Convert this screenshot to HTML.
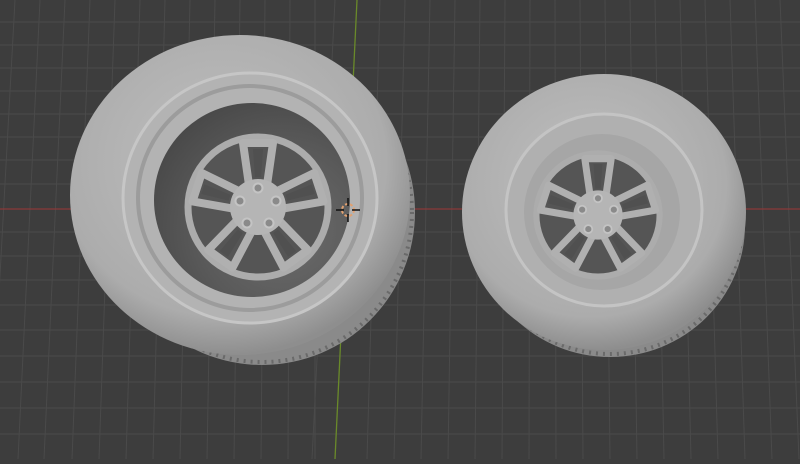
<!DOCTYPE html><html><head><style>html,body{margin:0;padding:0;background:#3d3d3d;overflow:hidden}</style></head><body>
<svg width="800" height="459" viewBox="0 0 800 459" xmlns="http://www.w3.org/2000/svg">
<defs>
<radialGradient id="tire" cx="0.45" cy="0.4" r="0.6"><stop offset="0" stop-color="#c0c0c0"/><stop offset="0.8" stop-color="#acacac"/><stop offset="1" stop-color="#8e8e8e"/></radialGradient>
<radialGradient id="hole" cx="0.65" cy="0.65" r="0.7"><stop offset="0" stop-color="#6e6e6e"/><stop offset="0.6" stop-color="#5a5a5a"/><stop offset="1" stop-color="#4a4a4a"/></radialGradient>
<g id="spoke"><path d="M-9,-22 L-15,-64 L15,-64 L9,-22" fill="none" stroke="#b0b0b0" stroke-width="8" stroke-linejoin="round"/><path d="M-3,-30 L-5,-58 L5,-58 L3,-30Z" fill="#505050"/></g>
<g id="wheel">
<circle r="73" fill="#555"/>
<circle r="70" fill="none" stroke="#acacac" stroke-width="7"/>
<use href="#spoke"/><use href="#spoke" transform="rotate(72)"/><use href="#spoke" transform="rotate(144)"/><use href="#spoke" transform="rotate(216)"/><use href="#spoke" transform="rotate(288)"/>
<circle r="28" fill="#b5b5b5"/>
<g fill="#8a8a8a" stroke="#c4c4c4" stroke-width="2"><circle cx="0" cy="-19" r="4.5"/><circle cx="18" cy="-6" r="4.5"/><circle cx="11" cy="16" r="4.5"/><circle cx="-11" cy="16" r="4.5"/><circle cx="-18" cy="-6" r="4.5"/></g>
</g>
</defs>
<rect width="800" height="459" fill="#3d3d3d"/>
<g stroke="#4a4a4a" stroke-width="1">
<path d="M0,22H800M0,45H800M0,68H800M0,91H800M0,114H800M0,137H800M0,160H800M0,184H800M0,232H800M0,256H800M0,280H800M0,305H800M0,330H800M0,356H800M0,382H800M0,408H800M0,434H800"/>
<path d="M15,0L-10,459M40,0L18,459M65,0L44,459M90,0L72,459M115,0L99,459M140,0L126,459M165,0L153,459M190,0L180,459M215,0L207,459M240,0L234,459M265,0L261,459M290,0L288,459M315,0L315,459M335,0L312,459M380,0L367,459M405,0L394,459M430,0L421,459M455,0L448,459M480,0L475,459M505,0L502,459M530,0L529,459M555,0L556,459M580,0L583,459M605,0L610,459M630,0L637,459M655,0L664,459M680,0L691,459M705,0L718,459M730,0L745,459M755,0L772,459M780,0L799,459"/>
</g>
<line x1="0" y1="209" x2="800" y2="209" stroke="#8a3a3a" stroke-width="1.3"/>
<line x1="357" y1="0" x2="335" y2="459" stroke="#6a8a2a" stroke-width="1.3"/>
<!-- left tire -->
<ellipse cx="262" cy="212" rx="153" ry="153" fill="#8a8a8a"/>
<ellipse cx="262" cy="212" rx="150" ry="150" fill="none" stroke="#6a6a6a" stroke-width="4" stroke-dasharray="2 5"/>
<ellipse cx="240" cy="195" rx="170" ry="160" fill="url(#tire)"/>
<ellipse cx="250" cy="198" rx="127" ry="125" fill="#b3b3b3" stroke="#c6c6c6" stroke-width="3"/>
<ellipse cx="250" cy="198" rx="112" ry="112" fill="none" stroke="#9c9c9c" stroke-width="4"/>
<ellipse cx="252" cy="200" rx="98" ry="97" fill="url(#hole)"/>
<use href="#wheel" transform="translate(258,207)"/>
<!-- right tire -->
<ellipse cx="610" cy="225" rx="135" ry="132" fill="#8a8a8a"/>
<ellipse cx="610" cy="225" rx="132" ry="129" fill="none" stroke="#6a6a6a" stroke-width="4" stroke-dasharray="2 5"/>
<ellipse cx="604" cy="212" rx="142" ry="138" fill="url(#tire)"/>
<ellipse cx="604" cy="210" rx="98" ry="96" fill="#b0b0b0" stroke="#c4c4c4" stroke-width="3"/>
<ellipse cx="602" cy="212" rx="78" ry="78" fill="#a6a6a6"/>
<use href="#wheel" transform="translate(598,215) scale(0.88)"/>
<!-- cursor -->
<g transform="translate(348,210)"><circle r="6" fill="none" stroke="#e0a070" stroke-width="2" stroke-dasharray="3 2"/><path d="M-12,0H-4M4,0H12M0,-12V-4M0,4V12" stroke="#111" stroke-width="1.5"/></g>
</svg>
</body></html>
